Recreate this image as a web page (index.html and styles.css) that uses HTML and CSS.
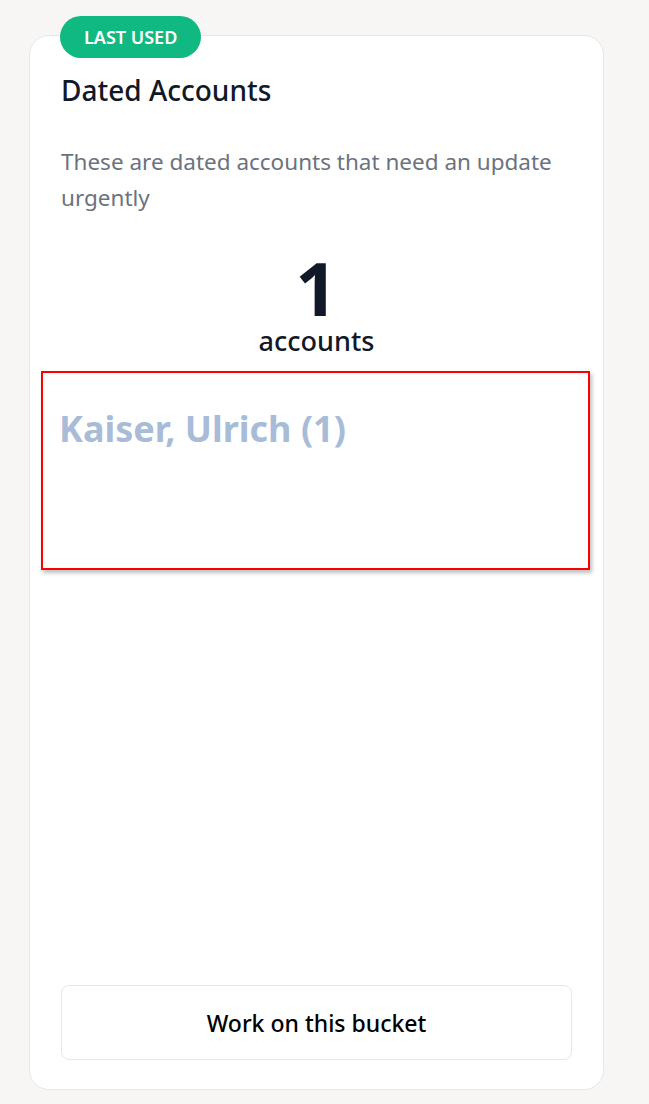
FILE: index.html
```html
<!DOCTYPE html>
<html lang="en">
<head>
    <meta charset="UTF-8">
    <meta name="viewport" content="width=device-width, initial-scale=1.0">
    <title>Buckets</title>
    <link rel="stylesheet" href="styles.css">
</head>
<body>
    <!-- bucket card -->
    <div class="card">
        <span class="badge">LAST USED</span>
        <h2 class="card-title">Dated Accounts</h2>
        <p class="card-desc">These are dated accounts that need an update urgently</p>

        <div class="count">
            <div class="count-num">1</div>
            <div class="count-label">accounts</div>
        </div>

        <div class="owners">
            <div class="owner">Kaiser, Ulrich (1)</div>
        </div>

        <button class="work-btn">Work on this bucket</button>
    </div>
</body>
</html>
```

FILE: styles.css
```css
* { box-sizing: border-box; }
body {
    margin: 0;
    font-family: "Noto Sans", "Open Sans", Arial, sans-serif;
    background: #f7f6f4;
    color: #111827;
}

/* card */
.card {
    position: relative;
    display: flex;
    flex-direction: column;
    width: 575px;
    height: 1055px;
    margin: 35px 0 0 29px;
    padding: 36px 31px 29px;
    background: white;
    border: 1px solid #e5e7eb;
    border-radius: 20px;
}
.badge {
    position: absolute;
    top: -20px;
    left: 30px;
    height: 42px;
    padding: 0 24px;
    line-height: 42px;
    border-radius: 21px;
    background: #10b981;
    color: white;
    font-size: 18px;
    font-weight: 600;
}
.card-title {
    margin: 0;
    font-size: 28px;
    font-weight: 500;
    line-height: 36px;
}
.card-desc {
    margin: 36px 0 0;
    color: #6b7280;
    font-size: 22.5px;
    line-height: 36px;
}

/* count */
.count {
    margin-top: 35px;
    text-align: center;
}
.count-num {
    font-size: 74px;
    font-weight: 700;
    line-height: 74px;
}
.count-label {
    font-size: 27px;
    font-weight: 500;
    line-height: 32px;
}

/* owner list */
.owners {
    height: 199px;
    margin: 14px -18px 0 -20px;
    padding: 34px 16px;
    border: 2px solid red;
    box-shadow: 2px 3px 4px rgba(0,0,0,0.25);
}
.owner {
    color: #a8bcd7;
    font-size: 36px;
    font-weight: 700;
    line-height: 44px;
}

.work-btn {
    margin-top: auto;
    height: 75px;
    background: white;
    border: 1px solid #e5e7eb;
    border-radius: 8px;
    font-family: inherit;
    font-size: 23px;
    font-weight: 500;
    color: #000;
    cursor: pointer;
}
```
